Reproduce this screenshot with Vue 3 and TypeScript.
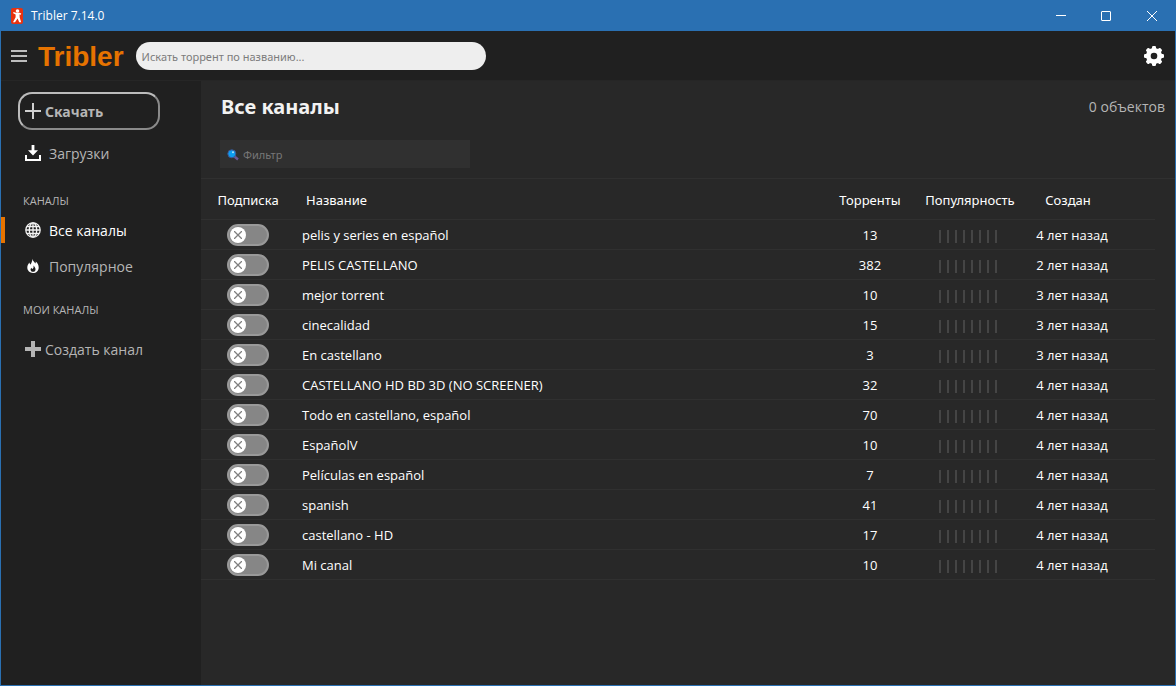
<script setup lang="ts">
import { ref } from 'vue'

interface Channel {
  name: string
  torrents: number
  created: string
  subscribed: boolean
}

const search = ref('')
const filter = ref('')

const channels = ref<Channel[]>([
  { name: 'pelis y series en español', torrents: 13, created: '4 лет назад', subscribed: false },
  { name: 'PELIS CASTELLANO', torrents: 382, created: '2 лет назад', subscribed: false },
  { name: 'mejor torrent', torrents: 10, created: '3 лет назад', subscribed: false },
  { name: 'cinecalidad', torrents: 15, created: '3 лет назад', subscribed: false },
  { name: 'En castellano', torrents: 3, created: '3 лет назад', subscribed: false },
  { name: 'CASTELLANO HD BD 3D (NO SCREENER)', torrents: 32, created: '4 лет назад', subscribed: false },
  { name: 'Todo en castellano, español', torrents: 70, created: '4 лет назад', subscribed: false },
  { name: 'EspañolV', torrents: 10, created: '4 лет назад', subscribed: false },
  { name: 'Películas en español', torrents: 7, created: '4 лет назад', subscribed: false },
  { name: 'spanish', torrents: 41, created: '4 лет назад', subscribed: false },
  { name: 'castellano - HD', torrents: 17, created: '4 лет назад', subscribed: false },
  { name: 'Mi canal', torrents: 10, created: '4 лет назад', subscribed: false },
])
</script>

<template>
  <div class="window">
    <div class="titlebar">
      <svg class="app-icon" width="12" height="16" viewBox="0 0 12 16">
        <rect x="0" y="0" width="12" height="16" rx="2" fill="#e8320f" />
        <circle cx="6.500" cy="3" r="1.800" fill="#fff" />
        <path d="M2.400 4 5 4.800h3.600l1.600.6-.4 1.400-1.300-.2.200 3 1.500 4.600H8.200L6.600 10.600 4 14.200H2l2.600-5V6.400L2.200 5.200z" fill="#fff" />
      </svg>
      <span class="caption">Tribler 7.14.0</span>
      <div class="controls">
        <button type="button" aria-label="Свернуть">
          <svg width="12" height="12" viewBox="0 0 12 12"><path d="M1 5.500h10" stroke="#fff" fill="none" /></svg>
        </button>
        <button type="button" aria-label="Развернуть">
          <svg width="12" height="12" viewBox="0 0 12 12"><rect x="1.500" y="1.500" width="9" height="9" rx="0.500" stroke="#fff" fill="none" /></svg>
        </button>
        <button type="button" aria-label="Закрыть">
          <svg width="12" height="12" viewBox="0 0 12 12"><path d="M1 1l10 10M11 1 1 11" stroke="#fff" fill="none" /></svg>
        </button>
      </div>
    </div>

    <header class="topbar">
      <button type="button" class="menu" aria-label="Меню">
        <svg width="16" height="12" viewBox="0 0 16 12"><path d="M0 1h16M0 6h16M0 11h16" stroke="#bdbdbd" stroke-width="2" /></svg>
      </button>
      <span class="brand">Tribler</span>
      <input v-model="search" class="search" type="text" aria-label="Поиск" placeholder="Искать торрент по названию..." />
      <button type="button" class="settings" aria-label="Настройки">
        <svg width="20" height="20" viewBox="0 0 20 20">
          <g fill="#fff">
            <rect x="8" y="0" width="4" height="20" rx="1.200" />
            <rect x="8" y="0" width="4" height="20" rx="1.200" transform="rotate(45 10 10)" />
            <rect x="8" y="0" width="4" height="20" rx="1.200" transform="rotate(90 10 10)" />
            <rect x="8" y="0" width="4" height="20" rx="1.200" transform="rotate(135 10 10)" />
            <circle cx="10" cy="10" r="8" />
          </g>
          <circle cx="10" cy="10" r="3.300" fill="#202020" />
        </svg>
      </button>
    </header>

    <div class="body">
      <nav class="sidebar">
        <button type="button" class="download">
          <svg width="16" height="16" viewBox="0 0 16 16"><path d="M8 0v16M0 8h16" stroke="#d0d0d0" stroke-width="2" /></svg>
          Скачать
        </button>
        <a href="#downloads" class="item">
          <svg width="16" height="16" viewBox="0 0 16 16">
            <path d="M6.600 0h2.800v5.200h3.600L8 10.600 3 5.200h3.600z" fill="#fff" />
            <path d="M1 10v5h14v-5" stroke="#fff" stroke-width="2" fill="none" />
          </svg>
          Загрузки
        </a>
        <h2>КАНАЛЫ</h2>
        <a href="#channels" class="item active">
          <svg width="16" height="16" viewBox="0 0 16 16" fill="none" stroke="#f2f2f2" stroke-width="1.300">
            <circle cx="8" cy="8" r="7.200" />
            <ellipse cx="8" cy="8" rx="3.700" ry="7.200" />
            <path d="M8 1v14M1 8h14M2 4.500h12M2 11.500h12" />
          </svg>
          Все каналы
        </a>
        <a href="#popular" class="item">
          <svg width="16" height="16" viewBox="0 0 16 16">
            <path
              fill="#fff"
              fill-rule="evenodd"
              d="M7.400.8c.3 2.400 1.900 3 2.900 4.600.5-.5.600-1 .5-1.800 1.900 1.600 2.900 3.600 2.900 5.800 0 3.400-2.500 5.600-5.700 5.600s-5.700-2.200-5.700-5.400c0-2 1-3.700 2.300-5 0 1.100.3 1.700.9 2C6.300 5.200 7.400 3.100 7.400.8zM8.300 7.600c.7 1.800.2 2.700-.8 3.400-.6-.1-.9-.6-1.100-1.200-.8.900-1 1.700-.7 2.500.3 1 1.200 1.500 2.300 1.500 1.500 0 2.500-1 2.500-2.400 0-1.700-1.100-2.700-2.200-3.800z"
            />
          </svg>
          Популярное
        </a>
        <h2>МОИ КАНАЛЫ</h2>
        <button type="button" class="create">
          <svg width="16" height="16" viewBox="0 0 16 16"><path d="M8 0v16M0 8h16" stroke="#b5b5b5" stroke-width="4" /></svg>
          Создать канал
        </button>
      </nav>

      <main class="content">
        <div class="heading">
          <h1>Все каналы</h1>
          <span class="count">0 объектов</span>
        </div>
        <label class="filter">
          <svg width="12" height="12" viewBox="0 0 12 12">
            <path d="M7.500 7.500 11 10.500" stroke="#6b5795" stroke-width="2.400" />
            <circle cx="4.800" cy="4.800" r="4" fill="#0c9df0" stroke="#40548f" />
            <circle cx="6" cy="3.300" r="1" fill="#a9e2ff" />
          </svg>
          <input v-model="filter" type="text" aria-label="Фильтр" placeholder="Фильтр" />
        </label>

        <div class="table-wrap">
          <table>
            <thead>
              <tr>
                <th class="sub">Подписка</th>
                <th class="name">Название</th>
                <th class="num">Торренты</th>
                <th class="pop">Популярность</th>
                <th class="date">Создан</th>
              </tr>
            </thead>
            <tbody>
              <tr v-for="channel in channels" :key="channel.name">
                <td class="sub">
                  <label class="toggle">
                    <input v-model="channel.subscribed" type="checkbox" :aria-label="channel.name" />
                    <span class="knob">
                      <svg width="8" height="8" viewBox="0 0 8 8"><path d="M0 0l8 8M8 0 0 8" stroke="#808080" stroke-width="1.300" /></svg>
                    </span>
                  </label>
                </td>
                <td class="name">{{ channel.name }}</td>
                <td class="num">{{ channel.torrents }}</td>
                <td class="pop"><span class="bars"><i v-for="n in 8" :key="n"></i></span></td>
                <td class="date">{{ channel.created }}</td>
              </tr>
            </tbody>
          </table>
        </div>
      </main>
    </div>
  </div>
</template>

<style>
body {
  margin: 0;
  background: #282828;
}
</style>

<style scoped>
* {
  box-sizing: border-box;
}
.window {
  display: flex;
  flex-direction: column;
  min-height: 100vh;
  border: 1px solid #2a70b2;
  border-top: 0;
  background: #282828;
  color: #fff;
  font-family: 'Open Sans', 'Noto Sans', sans-serif;
  font-size: 13px;
}
button {
  padding: 0;
  border: 0;
  background: none;
  color: inherit;
  font: inherit;
}
svg {
  display: block;
  flex: none;
}
.titlebar {
  display: flex;
  align-items: center;
  height: 31px;
  padding-left: 10px;
  background: #2a70b2;
}
.caption {
  margin-left: 8px;
  font-size: 12px;
}
.controls {
  display: flex;
  margin-left: auto;
}
.controls button {
  display: grid;
  place-items: center;
  width: 46px;
  height: 31px;
}
.controls button:first-child {
  padding-left: 2px;
}
.topbar {
  display: flex;
  align-items: center;
  height: 50px;
  padding: 0 11px 0 10px;
  border-bottom: 1px solid #262626;
  background: #202020;
}
.brand {
  margin-left: 11px;
  padding-top: 2px;
  color: #e67300;
  font-family: 'Liberation Sans', Arial, sans-serif;
  font-size: 28px;
  font-weight: bold;
}
.search {
  width: 350px;
  height: 28px;
  margin-left: 12px;
  padding: 2px 6px 0;
  border: 0;
  border-radius: 14px;
  background: #eee;
  color: #333;
  font: 11px 'Noto Sans', sans-serif;
}
.search::placeholder {
  color: #7c7c7c;
}
.settings {
  margin-left: auto;
}
.body {
  display: flex;
  flex: 1;
}
.sidebar {
  display: flex;
  flex: none;
  flex-direction: column;
  width: 200px;
  padding-top: 11px;
  background: #202020;
  color: #b5b5b5;
  font-size: 14px;
}
.download {
  display: flex;
  align-items: center;
  gap: 4px;
  width: 142px;
  height: 38px;
  margin: 0 0 5px 17px;
  padding: 0 5px;
  border: 2px solid #8a8a8a;
  border-top-color: #bcbcbc;
  border-left-color: #bcbcbc;
  border-radius: 14px;
  font-family: 'Noto Sans', sans-serif;
  font-weight: bold;
}
.item {
  display: flex;
  align-items: center;
  gap: 8px;
  height: 36px;
  padding-left: 24px;
  color: inherit;
  text-decoration: none;
}
.item.active {
  height: 26px;
  margin: 5px 0;
  padding-left: 20px;
  border-left: 4px solid #e67300;
  color: #fff;
}
h2 {
  margin: 18px 0 0 22px;
  font-size: 11px;
  font-weight: normal;
  line-height: 16px;
}
.download + .item + h2 {
  margin-top: 22px;
  margin-bottom: 3px;
}
.create {
  display: flex;
  align-items: center;
  gap: 4px;
  height: 36px;
  margin-top: 13px;
  padding-left: 24px;
}
.content {
  flex: 1;
  min-width: 0;
}
.heading {
  display: flex;
  align-items: center;
  justify-content: space-between;
  height: 50px;
  padding: 0 10px 0 20px;
}
h1 {
  margin: 0;
  color: #f2f2f2;
  font-family: 'Noto Sans', sans-serif;
  font-size: 20px;
}
.count {
  color: #b5b5b5;
  font-size: 14px;
}
.filter {
  display: flex;
  align-items: center;
  gap: 4px;
  width: 250px;
  height: 28px;
  margin: 9px 0 10px 19px;
  padding: 1px 7px 0;
  background: #303030;
}
.filter input {
  flex: 1;
  min-width: 0;
  padding: 0;
  border: 0;
  background: none;
  color: #ddd;
  font: 11px 'Noto Sans', sans-serif;
}
.filter input::placeholder {
  color: #777;
}
.table-wrap {
  padding-right: 20px;
  border-top: 1px solid #303030;
}
table {
  width: 100%;
  border-spacing: 0;
  table-layout: fixed;
}
th,
td {
  height: 30px;
  padding: 0;
  border-bottom: 1px solid #303030;
  text-align: center;
}
th {
  height: 41px;
  padding-top: 2px;
  font-family: 'Noto Sans', sans-serif;
  font-weight: normal;
}
.sub {
  width: 94px;
}
.name {
  padding-left: 7px;
  text-align: left;
}
th.name {
  padding-left: 11px;
}
.num,
.pop {
  width: 100px;
}
td.pop {
  padding: 3px 4px 0 0;
}
.date {
  width: 135px;
  padding-right: 31px;
}
th.date {
  padding-right: 39px;
}
.toggle {
  display: flex;
  align-items: center;
  width: 42px;
  height: 22px;
  margin: 0 auto;
  padding: 0 1px;
  border: 2px solid #999;
  border-radius: 11px;
  background: #868686;
}
.toggle input {
  width: 0;
  height: 0;
  margin: 0;
  appearance: none;
}
.knob {
  display: grid;
  place-items: center;
  width: 16px;
  height: 16px;
  border-radius: 50%;
  background: #fff;
}
.toggle input:checked + .knob {
  margin-left: auto;
}
.bars {
  display: flex;
  justify-content: center;
  gap: 6px;
}
.bars i {
  width: 2px;
  height: 13px;
  background: #454545;
}
</style>
